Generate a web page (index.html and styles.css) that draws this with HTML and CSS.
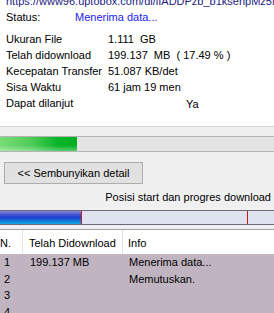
FILE: index.html
```html
<!DOCTYPE html>
<html>
<head>
<meta charset="utf-8">
<link rel="stylesheet" href="styles.css">
</head>
<body>
<div class="top">
  <div class="url">https://www96.uptobox.com/dl/iIADDPzb_b1ksenpMz5M</div>
  <div class="status"><span class="lbl">Status:</span><span class="stval">Menerima data...</span></div>
  <div class="info">
    <span>Ukuran File</span><span class="pre">1.111  GB</span>
    <span>Telah didownload</span><span class="pre">199.137  MB  ( 17.49 % )</span>
    <span>Kecepatan Transfer</span><span>51.087 KB/det</span>
    <span>Sisa Waktu</span><span>61 jam 19 men</span>
    <span>Dapat dilanjut</span><span class="ya">Ya</span>
  </div>
</div>
<div class="panel">
  <div class="progress"><div class="fill" style="width:77px"></div></div>
  <button class="btn">&lt;&lt; Sembunyikan detail</button>
  <div class="caption">Posisi start dan progres download</div>
  <div class="segbar">
    <div class="seg" style="width:81px"></div>
    <div class="mark" style="left:81px"></div>
    <div class="mark" style="left:247px"></div>
  </div>
</div>
<div class="table">
  <div class="thead">
    <div class="c1">N.</div><div class="c2">Telah Didownload</div><div class="c3">Info</div>
  </div>
  <div class="row"><div class="c1">1</div><div class="c2">199.137 MB</div><div class="c3">Menerima data...</div></div>
  <div class="row"><div class="c1">2</div><div class="c2"></div><div class="c3">Memutuskan.</div></div>
  <div class="row"><div class="c1">3</div><div class="c2"></div><div class="c3"></div></div>
  <div class="row"><div class="c1">4</div><div class="c2"></div><div class="c3"></div></div>
</div>
</body>
</html>
```
FILE: styles.css
```css
* { box-sizing: border-box; }
html, body { margin: 0; padding: 0; }
body {
  width: 274px;
  height: 313px;
  overflow: hidden;
  font-family: "Liberation Sans", Arial, sans-serif;
  font-size: 11px;
  color: #000;
  background: #c0b4c0;
}
.top {
  display: flow-root;
  background: #fff;
  height: 127px;
  border-bottom: 1px solid #d6d6d6;
  padding-left: 6px;
}
.url {
  margin-top: -4px;
  height: 12px;
  line-height: 10px;
  overflow: hidden;
  white-space: nowrap;
  color: #1a1a80;
}
.status {
  display: flex;
  line-height: 16px;
  margin-top: 1px;
}
.status .lbl { width: 69px; }
.stval { color: #2222ee; }
.info {
  margin-top: 6px;
  display: grid;
  grid-template-columns: 102px 1fr;
  grid-auto-rows: 16px;
  line-height: 16px;
}
.pre { white-space: pre; }
.ya { padding-left: 78px; margin-top: 1px; }
.panel {
  background: #f0f0f0;
  padding-top: 9px;
  height: 102px;
}
.progress {
  height: 16px;
  background: #e4e4e4;
  border-top: 1px solid #b4b4b4;
  border-bottom: 1px solid #b4b4b4;
}
.fill {
  height: 100%;
  background:
    linear-gradient(to bottom, rgba(255,255,255,0) 60%, rgba(255,255,255,0.35) 100%),
    linear-gradient(to right, #78dc78 0%, #50cc58 40%, #08b428 75%, #00b020 100%);
}
.btn {
  display: block;
  margin: 10px 0 0 4px;
  width: 139px;
  height: 22px;
  background: #e1e1e1;
  border: 1px solid #adadad;
  font-family: inherit;
  font-size: 11px;
  color: #000;
  padding: 0;
}
.caption {
  text-align: right;
  padding-right: 3px;
  line-height: 16px;
  margin-top: 5px;
}
.segbar {
  position: relative;
  margin-top: 5px;
  height: 15px;
  background: #dfe3f0;
  border-top: 1px solid #6c6c78;
  border-bottom: 1px solid #6c6c78;
}
.seg {
  height: 100%;
  background: linear-gradient(to bottom, #8a8ad8 0%, #4a5ad0 25%, #2040d0 50%, #1078d8 75%, #10a8e8 100%);
}
.mark {
  position: absolute;
  top: 0;
  width: 1px;
  height: 100%;
  background: #d01818;
}
.thead {
  display: flex;
  background: #fff;
  height: 25px;
  border-top: 1px solid #a0a0a0;
  line-height: 26px;
}
.thead > div { border-right: 1px solid #e2e2e2; }
.thead .c3 { border-right: none; }
.c1 { width: 23px; padding-left: 1px; }
.c2 { width: 100px; padding-left: 6px; }
.c3 { flex: 1; padding-left: 5px; }
.row {
  display: flex;
  height: 16.5px;
  line-height: 16px;
}
.row .c1 { padding-left: 4px; }
.row .c2 { padding-left: 7px; }
.row .c3 { padding-left: 6px; }
.thead .c1 { padding-left: 0; }
```
